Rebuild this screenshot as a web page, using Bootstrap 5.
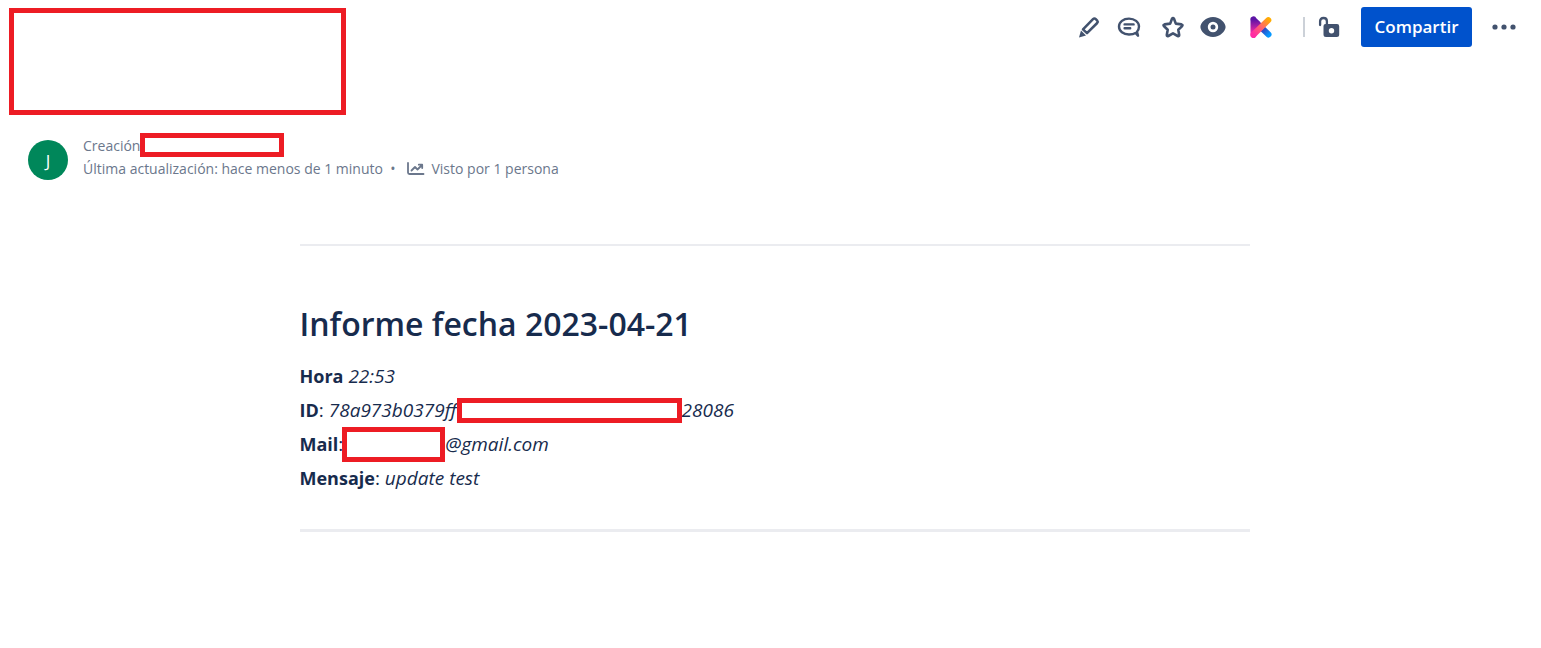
<!DOCTYPE html>
<html lang="es">
<head>
<meta charset="utf-8">
<meta name="viewport" content="width=device-width, initial-scale=1">
<title>Informe fecha 2023-04-21</title>
<link href="https://cdn.jsdelivr.net/npm/bootstrap@5.3.0/dist/css/bootstrap.min.css" rel="stylesheet">
<style>
body{font-family:"Open Sans","Noto Sans",sans-serif;color:#172b4d;background:#fff}
.page-head{padding:8px 17px 0 9px}
.redacted{border:5px solid #ed1c24;background:#fff;flex:none}
.redact-title{width:337px;height:107px}
.redact-author{width:144px;height:24px}
.redact-id{width:225px;height:25px}
.redact-mail{width:103px;height:35px;margin-left:-1px}
.tools{margin-top:-1px}
.tool{width:40px;height:40px;padding:0;border:0;background:none;color:#42526e;display:flex;align-items:center;justify-content:center}
.tool svg{display:block}
.divider{width:2px;height:20px;background:#ccd1d8;margin:0 4px 0 22px}
.share{height:40px;width:111px;padding:0;border:0;border-radius:3px;background:#0052cc;color:#fff;font-size:17px;font-weight:600;margin:0 12px}
.byline{padding:18px 28px 0;color:#6b778c;font-size:14px;line-height:23px}
.avatar{width:40px;height:40px;background:#00875a;color:#fff;font-size:17px;margin-top:7px;flex:none}
.byline-text{margin-left:15px}
.byline a{color:inherit;text-decoration:none}
.trend{margin:0 6px 0 12px}
.report{max-width:974px;padding:64px 12px 0;margin:0 auto;position:relative;left:4px}
.rule{border:0;height:2px;background:#ebecf0;opacity:1;margin:0}
.rule-end{height:3px}
.report h1{font-size:32px;line-height:40px;font-weight:600;margin:58px 0 15px}
.field{font-size:19px;line-height:34px;display:flex;align-items:center;height:34px;margin:0}
.field strong{font-size:18px;font-weight:700}
.field-list{margin-bottom:34px}
</style>
</head>
<body>
<header class="page-head d-flex justify-content-between align-items-start">
  <div class="redacted redact-title"></div>
  <div class="tools d-flex align-items-center" role="toolbar" aria-label="Acciones de página">
    <button class="tool" aria-label="Editar"><svg width="24" height="24" viewBox="0 0 24 24" fill="none" stroke="currentColor" stroke-width="2.5" stroke-linejoin="round"><path d="M6 14.4 16 4.2Q17.4 2.8 18.8 4.2L20.2 5.6Q21.3 6.8 20.2 8L10 18.2Z"/><path d="M4 15.4 9 20.4 2 22.4Z" fill="currentColor" stroke="none"/></svg></button>
    <button class="tool" aria-label="Comentarios"><svg width="24" height="24" viewBox="0 0 24 24" fill="none" stroke="currentColor" stroke-width="2.4" stroke-linecap="round" stroke-linejoin="round"><path d="M18.5 18C16.8 19.2 14.6 19.5 12 19.5 6.4 19.5 2 16.3 2 11.6S6.4 3.6 12 3.6s10 3.5 10 8c0 2.2-.8 3.8-2 5.1l1 4Z"/><path d="M7.6 9.4h9M7.6 13.2h5.6"/></svg></button>
    <button class="tool ms-1" aria-label="Favorito"><svg width="24" height="24" viewBox="0 0 24 24" fill="none" stroke="currentColor" stroke-width="2.6" stroke-linejoin="round"><path d="M11 3.8Q12 2.4 13 3.8L14.8 8.6 20.5 9.4Q22.3 9.9 20.9 11.3L17.3 14.8 18.2 19.9Q18.2 21.6 16.7 21L12 18.4 7.3 21Q5.8 21.6 5.8 19.9L6.7 14.8 3.1 11.3Q1.7 9.9 3.5 9.4L9.2 8.6Z"/></svg></button>
    <button class="tool" aria-label="Observar"><svg width="26" height="22" viewBox="0 0 26 22"><path fill="currentColor" fill-rule="evenodd" d="M13 1C6 1 .4 7 .4 11S6 21 13 21s12.6-6 12.6-10S20 1 13 1ZM13 5.8a5.2 5.2 0 1 1 0 10.4 5.2 5.2 0 0 1 0-10.4Z"/><circle cx="13" cy="11" r="2.5" fill="currentColor"/></svg></button>
    <button class="tool ms-2" aria-label="K"><svg width="22" height="22" viewBox="0 0 22 22" fill="none" stroke-linecap="round"><defs><linearGradient id="k1" x1="0" y1="0" x2="0" y2="1"><stop offset=".15" stop-color="#5d14a5"/><stop offset=".8" stop-color="#ff2ca4"/></linearGradient><linearGradient id="k2" gradientUnits="userSpaceOnUse" x1="4" y1="4" x2="19" y2="19"><stop offset=".2" stop-color="#5d14a5"/><stop offset=".65" stop-color="#304bc5"/><stop offset="1" stop-color="#0598ff"/></linearGradient><linearGradient id="k3" gradientUnits="userSpaceOnUse" x1="4" y1="19" x2="19" y2="3"><stop stop-color="#ff2ca4"/><stop offset=".55" stop-color="#ff6b65"/><stop offset="1" stop-color="#ffae00"/></linearGradient></defs><path d="M4 4.5 18.5 18.5" stroke="url(#k2)" stroke-width="6"/><path d="M.5 4.2A3 3 0 0 1 6.3 2.5L10 6V13L6.2 20.3A3 3 0 0 1 .5 18.5Z" fill="url(#k1)"/><path d="M3.6 18.5 18.3 4.2" stroke="url(#k3)" stroke-width="6"/></svg></button>
    <span class="divider"></span>
    <button class="tool" aria-label="Restricciones"><svg width="22" height="22" viewBox="0 0 22 22"><path d="M2.1 9V5.2Q2.1 2 5.5 2T8.9 5.2V10" fill="none" stroke="currentColor" stroke-width="2.3" stroke-linecap="round"/><path fill="currentColor" fill-rule="evenodd" d="M7.5 8H19a2.2 2.2 0 0 1 2.2 2.2v8.3A2.5 2.5 0 0 1 18.7 21H8a2.5 2.5 0 0 1-2.5-2.5V10a2 2 0 0 1 2-2Zm6 4a2.7 2.7 0 1 0 0 5.4 2.7 2.7 0 0 0 0-5.4Z"/></svg></button>
    <button class="btn share">Compartir</button>
    <button class="tool" aria-label="Más acciones"><svg width="24" height="6" viewBox="0 0 24 6" fill="currentColor"><circle cx="3" cy="3" r="2.6"/><circle cx="12" cy="3" r="2.6"/><circle cx="21" cy="3" r="2.6"/></svg></button>
  </div>
</header>
<section class="byline d-flex align-items-start">
  <div class="avatar rounded-circle d-flex align-items-center justify-content-center">J</div>
  <div class="byline-text">
    <div class="d-flex align-items-center">Creación<span class="redacted redact-author"></span></div>
    <div class="d-flex align-items-center"><span>Última actualización: hace menos de 1 minuto&nbsp; •</span>
      <svg class="trend" width="18" height="16" viewBox="0 0 18 16" fill="none" stroke="currentColor" stroke-width="1.8" stroke-linecap="round" stroke-linejoin="round"><path d="M1 2V11.5Q1 13 2.5 13H16.5M4.5 9.5 8 6l2.5 2.5L15 4M11.8 3.7H15.2V7"/></svg>
      <a href="#">Visto por 1 persona</a></div>
  </div>
</section>
<main class="report">
  <hr class="rule">
  <h1>Informe fecha 2023-04-21</h1>
  <div class="field-list">
    <p class="field"><strong>Hora</strong>&nbsp;<em>22:53</em></p>
    <p class="field"><strong>ID</strong>:&nbsp;<em>78a973b0379ff</em><span class="redacted redact-id"></span><em>28086</em></p>
    <p class="field"><strong>Mail</strong>:<span class="redacted redact-mail"></span><em>@gmail.com</em></p>
    <p class="field"><strong>Mensaje</strong>:&nbsp;<em>update test</em></p>
  </div>
  <hr class="rule rule-end">
</main>
<script src="https://cdn.jsdelivr.net/npm/bootstrap@5.3.0/dist/js/bootstrap.bundle.min.js"></script>
</body>
</html>
